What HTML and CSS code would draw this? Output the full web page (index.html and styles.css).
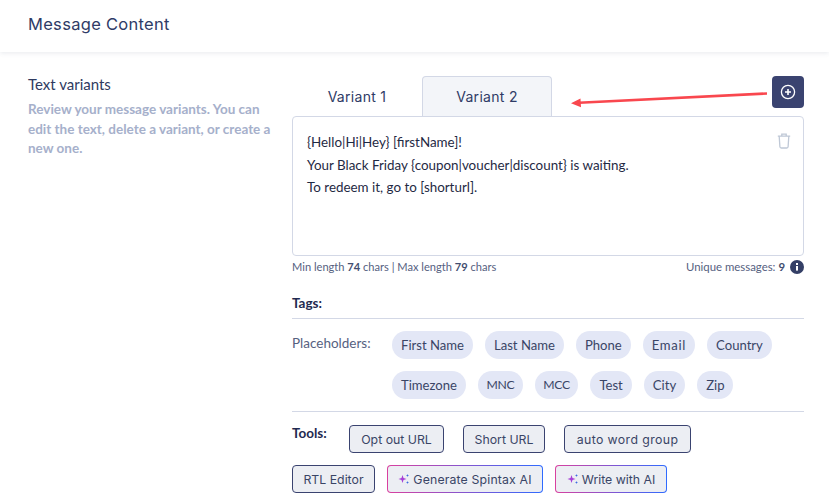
FILE: index.html
```html
<!DOCTYPE html>
<html lang="en">
<head>
<meta charset="utf-8">
<title>Message Content</title>
<link rel="stylesheet" href="styles.css">
</head>
<body>
<header class="page-header"><h1 class="page-title">Message Content</h1></header>
<main class="content">
  <aside class="intro">
    <h2 class="intro-title">Text variants</h2>
    <p class="intro-text">Review your message variants. You can edit the text, delete a variant, or create a new one.</p>
  </aside>
  <section class="editor">
    <div class="tab-row">
      <div class="tabs">
        <div class="tab">Variant 1</div>
        <div class="tab tab-active">Variant 2</div>
      </div>
      <button class="add-btn" aria-label="Add variant">
        <svg width="16" height="16" viewBox="0 0 16 16" fill="none" stroke="#fff" stroke-width="1.3"><circle cx="8" cy="8" r="6.6"/><path d="M8 5v6M5 8h6" stroke-width="1.6"/></svg>
      </button>
    </div>
    <div class="message-box">
      <p class="message-line">{Hello|Hi|Hey} [firstName]!</p>
      <p class="message-line">Your Black Friday {coupon|voucher|discount} is waiting.</p>
      <p class="message-line">To redeem it, go to [shorturl].</p>
      <svg class="trash" width="14" height="16" viewBox="0 0 14 16" fill="none" stroke="#bfc8d6" stroke-width="1.3"><path d="M.8 3.200h12.400M4.800 3V1.200h4.400V3M2.200 3.200l.7 10.600q.1 1.200 1.300 1.200h5.600q1.200 0 1.300-1.200l.7-10.600"/></svg>
    </div>
    <div class="meta">
      <span>Min length <b>74</b> chars | Max length <b>79</b> chars</span>
      <span class="meta-right"><span class="meta-unique">Unique messages: <b>9</b></span>
        <svg width="14" height="14" viewBox="0 0 14 14"><circle cx="7" cy="7" r="7" fill="#343f66"/><rect x="6" y="6" width="2" height="4.600" fill="#fff"/><rect x="6" y="3" width="2" height="2" fill="#fff"/></svg>
      </span>
    </div>
    <div class="tags-head">Tags:</div>
    <div class="placeholders">
      <div class="placeholders-label">Placeholders:</div>
      <div class="chips">
        <span class="chip">First Name</span>
        <span class="chip">Last Name</span>
        <span class="chip">Phone</span>
        <span class="chip chip-email">Email</span>
        <span class="chip">Country</span>
        <span class="chip">Timezone</span>
        <span class="chip chip-caps">MNC</span>
        <span class="chip chip-caps">MCC</span>
        <span class="chip">Test</span>
        <span class="chip">City</span>
        <span class="chip">Zip</span>
      </div>
    </div>
    <div class="tools">
      <div class="tool-row tool-row-first">
        <span class="tools-label">Tools:</span>
        <button class="tool tool-optout">Opt out URL</button>
        <button class="tool tool-short">Short URL</button>
        <button class="tool tool-group">auto word group</button>
      </div>
      <div class="tool-row">
        <button class="tool tool-rtl">RTL Editor</button>
        <button class="tool tool-ai tool-spintax"><svg width="12" height="12" viewBox="0 0 12 12"><path d="M4.500 2l1 3 3 1-3 1-1 3-1-3-3-1 3-1z" fill="#a63fd6"/><path d="M9.500 1l.4 1.100 1.100.4-1.100.4-.4 1.100-.4-1.100L8 2.500l1.100-.4zM9.500 8l.4 1.100 1.100.4-1.100.4-.4 1.100-.4-1.100L8 9.500l1.100-.4z" fill="#3d6be0"/></svg>Generate Spintax AI</button>
        <button class="tool tool-ai tool-write"><svg width="12" height="12" viewBox="0 0 12 12"><path d="M4.500 2l1 3 3 1-3 1-1 3-1-3-3-1 3-1z" fill="#a63fd6"/><path d="M9.500 1l.4 1.100 1.100.4-1.100.4-.4 1.100-.4-1.100L8 2.500l1.100-.4zM9.500 8l.4 1.100 1.100.4-1.100.4-.4 1.100-.4-1.100L8 9.500l1.100-.4z" fill="#3d6be0"/></svg>Write with AI</button>
      </div>
    </div>
  </section>
</main>
<svg class="arrow" width="200" height="16" viewBox="0 0 200 16"><path d="M196 1.500L8 10.800" stroke="#f9474e" stroke-width="2.600" fill="none"/><path d="M0 11.200L9.500 6.500l.5 8.800z" fill="#f9474e"/></svg>
</body>
</html>
```
FILE: styles.css
```css
* { box-sizing: border-box; }
html, body { margin: 0; padding: 0; }
body {
  width: 829px;
  height: 503px;
  overflow: hidden;
  position: relative;
  background: #fff;
  font-family: "Lato", "Noto Sans", sans-serif;
  color: #2f3a5f;
}
.page-header {
  height: 52px;
  padding: 0 28px;
  display: flex;
  align-items: center;
  box-shadow: 0 1px 5px rgba(60, 70, 110, 0.12);
}
.page-title {
  margin: 0 0 4px;
  font: 400 16.5px "Inter", sans-serif;
  letter-spacing: 0.3px;
  color: #2f3b66;
}
.content {
  display: flex;
  padding: 23px 25px 0 28px;
}
.intro { width: 264px; flex: none; }
.intro-title {
  margin: 0;
  font: 400 15px/18px "Lato", sans-serif;
  color: #2f3a5f;
}
.intro-text {
  margin: 7px 0 0;
  width: 245px;
  font: 700 13.5px/19.5px "Lato", sans-serif;
  color: #a6b0cb;
}
.editor { width: 512px; flex: none; padding-top: 1px; }
.tab-row { display: flex; justify-content: space-between; align-items: flex-start; height: 40px; }
.tabs { display: flex; }
.tab {
  width: 130px;
  height: 40px;
  padding-bottom: 1px;
  display: flex;
  align-items: center;
  justify-content: center;
  font: 400 14px "Inter", sans-serif;
  letter-spacing: 0.3px;
  color: #2f3b66;
  border: 1px solid transparent;
  border-bottom: 0;
}
.tab-active {
  background: #f3f5f9;
  border-color: #d3d8e6;
  border-radius: 4px 4px 0 0;
}
.add-btn {
  width: 32px;
  height: 32px;
  padding: 0;
  border: 0;
  border-radius: 4px;
  background: #3a4370;
  display: flex;
  align-items: center;
  justify-content: center;
}
.message-box {
  position: relative;
  height: 140px;
  padding: 14px 14px;
  border: 1px solid #d3d8e6;
  border-radius: 4px;
}
.message-line {
  margin: 0;
  font-size: 13.4px;
  line-height: 22.5px;
  color: #1f2a44;
}
.trash { position: absolute; top: 16px; right: 12px; }
.meta {
  display: flex;
  justify-content: space-between;
  align-items: center;
  margin-top: 3px;
  font-size: 11.1px;
  line-height: 16px;
  color: #56617f;
}
.meta b { color: #434e70; }
.meta-right { display: flex; align-items: center; gap: 5px; }
.meta-unique { font-size: 11.4px; }
.tags-head {
  margin-top: 19px;
  height: 25px;
  border-bottom: 1px solid #d3d8e6;
  font-size: 13.5px;
  font-weight: 700;
  color: #1f2a50;
  line-height: 18px;
}
.placeholders {
  display: flex;
  padding: 12px 0 12px;
  border-bottom: 1px solid #d3d8e6;
}
.placeholders-label { width: 100px; flex: none; font-size: 13.5px; color: #56617f; line-height: 24px; }
.chips { display: flex; flex-wrap: wrap; gap: 12px; }
.chip {
  height: 28px;
  padding: 0 9px;
  border-radius: 14px;
  background: #e3e7f6;
  font-size: 13.1px;
  line-height: 28px;
  color: #3a4566;
}
.chip-caps { font-size: 12.2px; letter-spacing: -0.3px; padding: 0 8.5px; }
.chip-email { letter-spacing: 0.7px; }
.tools {
  display: flex;
  flex-direction: column;
  gap: 12px;
  padding-top: 13px;
}
.tool-row {
  display: flex;
  gap: 12px;
  align-items: flex-start;
}
.tool-row-first { gap: 19px; }
.tools-label { font-size: 13.5px; font-weight: 700; color: #1f2a50; line-height: 16px; width: 38px; }
.tool {
  height: 28px;
  padding: 0;
  border: 1px solid #3a4370;
  border-radius: 4px;
  background: #eceef3;
  font: 400 12.3px "Inter", sans-serif;
  color: #3a4566;
  display: flex;
  align-items: center;
  justify-content: center;
}
.tool-optout { width: 95px; }
.tool-short { width: 82px; }
.tool-group { width: 127px; letter-spacing: 0.4px; }
.tool-rtl { width: 83px; }
.tool-spintax { width: 156px; letter-spacing: 0.15px; }
.tool-write { width: 112px; }
.tool-ai {
  gap: 3px;
  border: 1px solid transparent;
  background: linear-gradient(#eceef3, #eceef3) padding-box, linear-gradient(90deg, #d9409f, #2f6bff) border-box;
}
.arrow { position: absolute; left: 571px; top: 92px; }
```
